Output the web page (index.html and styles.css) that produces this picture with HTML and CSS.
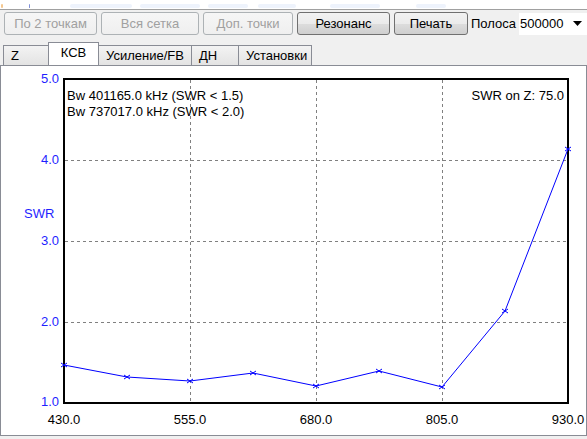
FILE: index.html
```html
<!DOCTYPE html>
<html>
<head>
<meta charset="utf-8">
<link rel="stylesheet" href="styles.css">
</head>
<body>
<div class="app">
  <div class="topstrip">
    <span class="blur b1"></span><span class="blur b2"></span><span class="blur b3"></span><span class="blur b4"></span><span class="blur b5"></span><span class="blur b6"></span><span class="blur b7"></span><span class="blur b8"></span>
  </div>
  <div class="toolbar">
    <button class="btn disabled w93">По 2 точкам</button>
    <button class="btn disabled w98">Вся сетка</button>
    <button class="btn disabled w90">Доп. точки</button>
    <button class="btn w93">Резонанс</button>
    <button class="btn w74">Печать</button>
    <div class="band">
      <span class="label">Полоса</span>
      <div class="select"><span class="val">500000</span><svg class="arrow" width="9" height="5" viewBox="0 0 9 5"><polygon points="0,0 9,0 4.5,5" fill="#000"/></svg></div>
    </div>
  </div>
  <div class="tabs">
    <div class="tab t1">Z</div>
    <div class="tab active t2">КСВ</div>
    <div class="tab t3">Усиление/FB</div>
    <div class="tab t4">ДН</div>
    <div class="tab t5">Установки</div>
  </div>
  <div class="panel">
    <svg class="chart" width="585" height="369" viewBox="1 66 585 369" xmlns="http://www.w3.org/2000/svg">
      <g class="grid">
        <line x1="190.5" y1="80" x2="190.5" y2="402"/>
        <line x1="316.5" y1="80" x2="316.5" y2="402"/>
        <line x1="442.5" y1="80" x2="442.5" y2="402"/>
        <line x1="65" y1="160.5" x2="567" y2="160.5"/>
        <line x1="65" y1="241.5" x2="567" y2="241.5"/>
        <line x1="65" y1="322.5" x2="567" y2="322.5"/>
      </g>
      <rect class="frame" x="64" y="79" width="504" height="324"/>
      <polyline class="curve" points="64,365 127,377 190,381 253,373 316,386 379,371 442,387 505,311 568,149"/>
      <g class="marks">
        <path d="M61,363l6,4M61,367l6,-4"/>
        <path d="M124,375l6,4M124,379l6,-4"/>
        <path d="M187,379l6,4M187,383l6,-4"/>
        <path d="M250,371l6,4M250,375l6,-4"/>
        <path d="M313,384l6,4M313,388l6,-4"/>
        <path d="M376,369l6,4M376,373l6,-4"/>
        <path d="M439,385l6,4M439,389l6,-4"/>
        <path d="M502,309l6,4M502,313l6,-4"/>
        <path d="M565,147l6,4M565,151l6,-4"/>
      </g>
      <g class="ylab">
        <text x="59" y="83">5.0</text>
        <text x="59" y="164">4.0</text>
        <text x="59" y="245">3.0</text>
        <text x="59" y="326">2.0</text>
        <text x="59" y="406">1.0</text>
      </g>
      <text class="swr" x="24" y="218">SWR</text>
      <g class="xlab">
        <text x="64" y="424">430.0</text>
        <text x="190" y="424">555.0</text>
        <text x="316" y="424">680.0</text>
        <text x="442" y="424">805.0</text>
        <text x="568" y="424">930.0</text>
      </g>
      <text class="info" x="67" y="100">Bw 401165.0 kHz (SWR &lt; 1.5)</text>
      <text class="info" x="67" y="116">Bw 737017.0 kHz (SWR &lt; 2.0)</text>
      <text class="info end" x="564" y="100">SWR on Z: 75.0</text>
    </svg>
  </div>
</div>
</body>
</html>
```
FILE: styles.css
```css
html, body {
  margin: 0;
  padding: 0;
}
body {
  width: 587px;
  height: 439px;
  overflow: hidden;
  background: #f0f0f0;
  font-family: "Liberation Sans", Arial, sans-serif;
  font-size: 13px;
  color: #000;
}
.app {
  display: flex;
  flex-direction: column;
  width: 587px;
  height: 439px;
}
.topstrip {
  height: 9px;
  background: #fff;
  border-bottom: 1px solid #a0a0a0;
  display: flex;
  align-items: center;
  overflow: hidden;
}
.blur {
  height: 4px;
  background: #eef3fc;
  border-radius: 2px;
  margin-top: 3px;
}
.b1 { width: 2px; background: #f5c890; margin-left: 1px; }
.b2 { width: 1px; background: #8090d8; margin-left: 26px; }
.b3 { width: 62px; margin-left: 40px; }
.b4 { width: 60px; margin-left: 8px; }
.b5 { width: 40px; margin-left: 8px; }
.b6 { width: 38px; margin-left: 10px; }
.b7 { width: 50px; margin-left: 34px; }
.b8 { width: 30px; margin-left: 36px; }
.toolbar {
  display: flex;
  align-items: center;
  height: 31px;
  padding: 2px 0 6px 4px;
  box-sizing: border-box;
  gap: 4px;
}
.btn {
  flex: none;
  margin: 0;
  height: 23px;
  box-sizing: border-box;
  border: 1px solid #707070;
  border-radius: 3px;
  background: linear-gradient(#f2f2f2 0%, #ebebeb 50%, #dddddd 51%, #cfcfcf 100%);
  font-family: "Liberation Sans", Arial, sans-serif;
  font-size: 13px;
  color: #000;
  padding: 0;
}
.btn.disabled {
  border-color: #adb2b5;
  background: linear-gradient(#f6f6f6, #efefef);
  color: #a0a0a0;
}
.w93 { width: 93px; }
.w98 { width: 98px; }
.w90 { width: 90px; }
.w74 { width: 74px; }
.band {
  flex: 1;
  min-width: 0;
  display: flex;
  align-items: center;
  gap: 3px;
  margin-left: -1px;
}
.label {
  flex: none;
  font-size: 13px;
  white-space: nowrap;
}
.select {
  flex: 1;
  min-width: 0;
  height: 22px;
  background: #fff;
  display: flex;
  align-items: center;
  padding: 0 5px 0 1px;
  font-size: 13px;
}
.val {
  flex: 1;
}
.arrow {
  flex: none;
  display: block;
}
.tabs {
  display: flex;
  align-items: flex-end;
  height: 24px;
  padding-left: 3px;
}
.tab {
  height: 20px;
  box-sizing: border-box;
  border: 1px solid #898c95;
  border-bottom: none;
  border-right: none;
  background: linear-gradient(#f3f3f3, #e3e3e3);
  font-size: 13px;
  padding-left: 7px;
  display: flex;
  align-items: center;
}
.tab.t5 { border-right: 1px solid #898c95; }
.tab.active {
  height: 23px;
  background: #fff;
  padding-left: 0;
  justify-content: center;
  align-items: flex-start;
  padding-top: 2px;
  font-size: 13px;
  border-right: 1px solid #898c95;
}
.t1 { width: 45px; }
.t2 { width: 51px; }
.t3 { width: 92px; border-left: none; }
.t4 { width: 47px; }
.t5 { width: 74px; }
.panel {
  height: 371px;
  box-sizing: border-box;
  border: 1px solid #898c95;
  background: #fff;
}
.chart {
  display: block;
}
.grid line {
  stroke: #808080;
  stroke-width: 1;
  stroke-dasharray: 3 3;
}
.frame {
  fill: none;
  stroke: #000;
  stroke-width: 2;
}
.curve {
  fill: none;
  stroke: #0000ff;
  stroke-width: 1;
}
.marks path {
  fill: none;
  stroke: #0000ff;
  stroke-width: 1;
}
.ylab text {
  font-family: "Liberation Sans", Arial, sans-serif;
  font-size: 13px;
  fill: #1f1fff;
  text-anchor: end;
}
.swr {
  font-family: "Liberation Sans", Arial, sans-serif;
  font-size: 13px;
  fill: #1f1fff;
}
.xlab text {
  font-family: "Liberation Sans", Arial, sans-serif;
  font-size: 13px;
  fill: #000;
  text-anchor: middle;
}
.info {
  font-family: "Liberation Sans", Arial, sans-serif;
  font-size: 13px;
  fill: #000;
}
.info.end {
  text-anchor: end;
}
```
